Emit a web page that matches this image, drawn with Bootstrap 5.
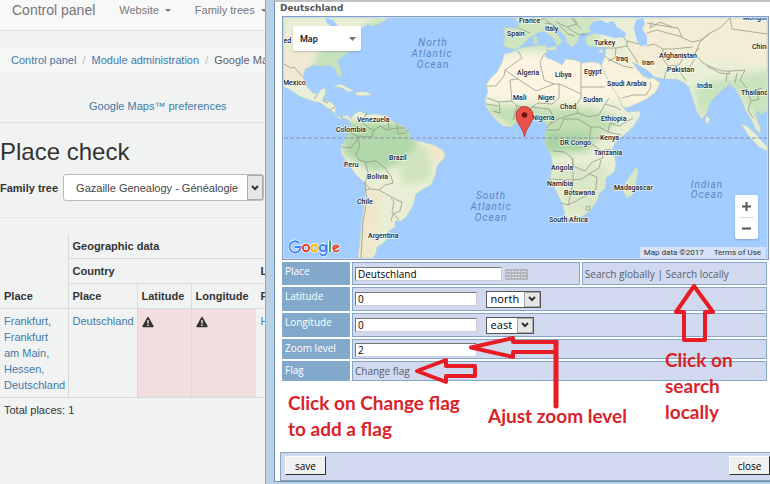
<!DOCTYPE html>
<html lang="en">
<head>
<meta charset="utf-8">
<meta name="viewport" content="width=device-width, initial-scale=1">
<title>Place check</title>
<link href="https://cdn.jsdelivr.net/npm/bootstrap@5.3.0/dist/css/bootstrap.min.css" rel="stylesheet">
<style>
body{font:11px/16px "Liberation Sans",Arial,sans-serif;color:#333;background:#f1f3f2}
a{color:#4379a8;text-decoration:none}
.admin{width:265px;flex:none;white-space:nowrap}
.topbar{height:31px;background:#f8f8f8;border-bottom:1px solid #dfe1e1;padding:0 0 10px 12px;--bs-navbar-padding-y:0;gap:24px}
.topbar a{color:#777}
.topbar .site-name{font-size:14px}
.topbar .dropdown-toggle::after{border-width:3px;border-bottom:0;margin-left:6px;vertical-align:2px}
.crumbs{background:#f5f6f6;padding:5px 0 5px 11px;margin:16px 0 0;height:26px;font-size:11px;flex-wrap:nowrap;--bs-breadcrumb-item-padding-x:6px;--bs-breadcrumb-divider-color:#bbb}
.crumbs li{flex:none}
.prefs{margin-top:25px;padding-left:89px;height:25px;border-bottom:1px solid #dcdede}
h1{font-size:24px;line-height:28px;margin:15px 0 8px;font-weight:400}
.tree-row{gap:5px;padding-bottom:16px;border-bottom:1px solid #e6e8e8;margin-bottom:16px}
.tree-pick{position:relative;flex:1;margin-right:1px}
.tree-pick select{appearance:none;width:100%;height:27px;border:1px solid #bbb;border-radius:3px;background:#fff;padding:0 12px;color:#444;font-size:11px}
.drop{position:absolute;right:1px;top:1px;bottom:1px;width:16px;background:#e7e7e7;border:1px solid #aaa;pointer-events:none;display:grid;place-items:center}
.places{width:300px;table-layout:fixed;border-collapse:collapse}
.places th,.places td{border:1px solid #d8dbdb;padding:4px;vertical-align:bottom;white-space:normal;line-height:16px}
.places td{vertical-align:top;height:89px}
.places tr>*:first-child.edge{border-left:0;border-top:0}
.places .top-cell{border-top:0}
.places .open{border-right-color:transparent}
.places .missing{background:#f2dede}
.popup{flex:1;min-width:0;background:#bad1e4;padding:0 0 2px 8px;border-left:1px solid #92a9ba}
.pane{height:100%;background:#fff;border:1px solid #6e93b0;border-top:2px solid #bfc3c7;border-right:0;padding:0 0 0 5px;font:10px/14px "Open Sans",Tahoma,sans-serif;color:#4b5566}
.pane h2{font:bold 9px/13px "DejaVu Sans",Verdana,sans-serif;margin:0 0 1px;color:#555}
.mapbox{margin:0 1px 0 2px;border:1px solid #7fa0c2;padding:1px;background:#d0d9ee;position:relative}
.mapbox>svg{display:block;width:100%;height:auto}
.map-type{position:absolute;left:10px;top:9px;width:68px;height:25px;background:#fff;border:0;border-radius:2px;padding:0 5px 0 7px;font:500 9px Roboto,sans-serif;color:#111;box-shadow:0 1px 2px #0003}
.map-zoom{position:absolute;right:10px;bottom:20px;width:23px;background:#fff;border-radius:2px;box-shadow:0 1px 2px #0003}
.map-zoom button{border:0;background:none;height:22px;padding:0;display:grid;place-items:center}
.map-zoom button+button{border-top:1px solid #ddd;margin:0 4px}
.map-legal{position:absolute;right:2px;bottom:1px;background:#d3e2f6;font:8px/11px Roboto,sans-serif;padding:0 5px 0 4px;gap:10px}
.map-legal a,.map-legal span{color:#333}
.coords{width:calc(100% - 1px);border-collapse:separate;border-spacing:2px}
.coords th{background:#82a9cb;color:#fff;font-weight:400;width:68px;vertical-align:top;padding:1px 2px;border:1px solid #82a9cb}
.coords td{background:#d0d9ee;border:1px solid #86a6c6;padding:0 2px;vertical-align:middle}
.coords tr{height:23px}
.coords tr.tall{height:24px}
.coords tr.short{height:20px}
.coords input{width:122px;height:14px;font-size:10px;line-height:12px;color:#000;border:1px solid #ccd;border-top-color:#777;border-left-color:#777;padding:0 2px;vertical-align:middle;background:#fff}
.coords input.wide{width:147px}
.coords select{appearance:none;height:17px;border:1px solid #555;padding:0 20px 0 4px;background:#fff;font-size:11px;line-height:14px;color:#000;display:block}
.coords a{color:#566073}
.pick{position:relative;display:inline-block;vertical-align:middle;margin-left:6px}
.foot{background:#d0d9ee;border:1px solid #8aa4bd;border-right:0;height:29px;padding:3px 0 0 4px;margin-top:auto}
.foot button{font-size:10px;line-height:12px;height:19px;width:41px;background:#f0f0f0;color:#000;border:1px solid #fff;border-right-color:#333;border-bottom-color:#333;padding:0}
.notes{position:absolute;left:0;top:0;width:770px;height:484px;pointer-events:none}
.lbl text{font:500 7px Roboto,sans-serif;fill:#222;stroke:#fff;stroke-width:1.6px;stroke-opacity:.7;paint-order:stroke}
.sea text{font:italic 10px Roboto,sans-serif;fill:#5b86c0;letter-spacing:1px}
.notes text{font:700 19px/26px Lato,Calibri,sans-serif;fill:#d8232a}
</style>
<script src="https://cdn.jsdelivr.net/npm/bootstrap@5.3.0/dist/js/bootstrap.bundle.min.js"></script>
</head>
<body>
<div class="d-flex vh-100 position-relative overflow-hidden">
<main class="admin overflow-hidden">
  <nav class="topbar navbar flex-nowrap justify-content-start">
    <a class="site-name" href="#">Control panel</a>
    <a class="dropdown-toggle" href="#">Website</a>
    <a class="dropdown-toggle" href="#">Family trees</a>
  </nav>
  <ol class="breadcrumb crumbs">
    <li class="breadcrumb-item"><a href="#">Control panel</a></li>
    <li class="breadcrumb-item"><a href="#">Module administration</a></li>
    <li class="breadcrumb-item active">Google Maps™</li>
  </ol>
  <div class="prefs"><a href="#">Google Maps™ preferences</a></div>
  <h1>Place check</h1>
  <div class="tree-row d-flex align-items-center">
    <label class="fw-bold" for="tree">Family tree</label>
    <div class="tree-pick"><select id="tree"><option>Gazaille Genealogy - Généalogie</option></select>
      <span class="drop"><svg width="8" height="6" fill="none" stroke="#333" stroke-width="2"><path d="M1 1l3 3 3-3"/></svg></span></div>
  </div>
  <table class="places">
    <colgroup><col style="width:68px"><col style="width:69px"><col style="width:54px"><col style="width:65px"><col></colgroup>
    <tr><th class="edge" rowspan="3">Place</th><th class="top-cell" colspan="4">Geographic data</th></tr>
    <tr><th class="open" colspan="3">Country</th><th>Locality</th></tr>
    <tr><th>Place</th><th>Latitude</th><th class="open">Longitude</th><th>Place</th></tr>
    <tr><td class="edge"><a href="#">Frankfurt, Frankfurt am Main, Hessen, Deutschland</a></td><td><a href="#">Deutschland</a></td>
      <td class="missing"><svg width="12" height="12" viewBox="0 0 12 12"><path d="M6 .8Q6.5.8 6.8 1.4L11.6 10Q11.9 11.1 11 11.2H1Q.1 11.1.4 10L5.2 1.4Q5.5.8 6 .8Z" fill="#333"/><path d="M6 4v3.5M6 8.6v1.4" stroke="#f2dede" stroke-width="1.5"/></svg></td>
      <td class="missing open"><svg width="12" height="12" viewBox="0 0 12 12"><path d="M6 .8Q6.5.8 6.8 1.4L11.6 10Q11.9 11.1 11 11.2H1Q.1 11.1.4 10L5.2 1.4Q5.5.8 6 .8Z" fill="#333"/><path d="M6 4v3.5M6 8.6v1.4" stroke="#f2dede" stroke-width="1.5"/></svg></td>
      <td><a href="#">Hessen</a></td></tr>
  </table>
  <div class="p-1">Total places: 1</div>
</main>

<section class="popup">
<div class="pane d-flex flex-column">
  <h2>Deutschland</h2>
  <div class="mapbox">
  <svg viewBox="285 18 483 240" role="img" aria-label="World map">
    <defs>
      <filter id="soft"><feGaussianBlur stdDeviation="3"/></filter>
      <clipPath id="land">
        <path id="am" d="M285 18H389L380 24 373 26 369 24 361 29 355 33 358 42 352 51 345 55 338 61 341 68 343 75 340 77 336 69 331 65 323 66 315 65 306 69 304 77 308 87 315 94 320 93 322 89 327 88 326 95 323 100 332 102 337 107 336 115 342 117 348 115 352 119 355 114 361 111 367 115 375 114 388 116 395 122 404 126 411 133 411 140 424 142 437 146 445 151 446 157 438 166 436 176 432 185 424 189 417 194 414 206 407 217 402 221 396 221 396 227 389 232 390 238 383 244 378 247 377 253 374 258H359L361 240 363 220 366 200 366 183 357 175 349 164 342 153 342 147 346 140 350 131 352 123 347 118 341 119 337 114 331 110 322 103 310 100 300 96 292 90 285 87Z"/>
        <path id="af" d="M505 54L513 52 522 48 535 46 546 45 548 49 546 57 556 61 563 65 567 59 575 60 584 63 592 62 600 63 604 68 608 77 613 88 620 97 623 106 628 112 641 111 641 116 634 127 625 135 617 142 613 149 616 158 617 165 615 172 607 178 606 188 600 194 599 199 592 210 584 216 570 219 566 215 563 203 557 191 551 179 554 165 551 153 546 143 546 133 549 128 545 121 536 119 530 122 520 121 512 127 504 126 496 119 490 112 486 104 487 97 489 91 487 85 491 79 498 72 503 63 505 55Z"/>
        <path id="eu" d="M515 18H768V110L762 115 758 109 757 116 761 126 762 134 757 130 752 119 747 111 742 99 737 90 731 84 724 89 719 94 711 102 708 112 703 119 698 112 693 96 690 87 684 82 677 79 665 79 656 77 648 70 638 64 633 62 638 69 644 76 651 79 654 78 661 83 657 92 646 100 628 108 624 107 620 98 612 85 607 76 602 67 606 56 607 47 598 47 590 46 586 40 589 36 596 33 591 31 587 34 583 32 580 37 577 44 572 47 568 42 566 36 559 29 554 26 555 31 560 36 563 42 558 46 555 39 549 34 544 31 538 33 531 37 525 43 518 49 510 48 505 46 506 36 505 28 519 28 520 23Z"/>
        <path id="isle" d="M637 167L639 171 637 181 633 195 628 198 625 192 627 182 631 177ZM334 86L342 84 351 89 355 91 350 92 343 88ZM357 92L368 92 373 95 363 96 357 95ZM742 124L748 126 757 134 768 147V151L760 147 749 135ZM707 115L711 119 709 124 706 121ZM535 37L538 36 538 44 535 43ZM548 48L557 46 556 50 549 50ZM599 51L605 49 602 53Z"/>
      </clipPath>
    </defs>
    <rect x="285" y="18" width="483" height="240" fill="#a3ccff"/>
    <g clip-path="url(#land)">
      <rect x="285" y="18" width="483" height="240" fill="#e9efd6"/>
      <g filter="url(#soft)">
        <path d="M280 30H330L315 70 285 90Z" fill="#f0ead4"/>
        <path d="M320 50L385 15V40L345 80 310 72Z" fill="#c5e2bd"/>
        <path d="M480 60L600 50 625 98 590 101 480 98Z" fill="#fdf4e2"/>
        <path d="M600 55L665 80 640 108 615 100Z" fill="#fbf2da"/>
        <path d="M480 106L590 108 622 118 605 135 590 152 545 156 525 135Z" fill="#c2dfb3"/>
        <path d="M545 132H588V150H545Z" fill="#a9d3a2"/>
        <path d="M550 165H612L600 215H570Z" fill="#dbe8c8"/>
        <path d="M650 15H770V65L700 60 640 75 625 55Z" fill="#f4edd6"/>
        <path d="M500 15H600V50H500Z" fill="#cfe5c0"/>
        <path d="M342 122L412 122 418 145 398 165 375 172 345 155Z" fill="#b0d8a8"/>
        <path d="M418 144L432 150 432 180 405 185 400 165Z" fill="#cfe4bd"/>
        <path d="M430 144L450 150 440 165 428 158Z" fill="#f2e6cc"/>
        <path d="M360 185L385 190 375 260H355Z" fill="#efe8cc"/>
        <path d="M695 85L770 70V140L740 95 700 118Z" fill="#c9e3bd"/>
      </g>
    </g>
    <path d="M593 33L590 28 594 22 602 20 608 23 614 21 618 27 627 33 626 37 615 38 605 35ZM637 20L644 18 646 24 643 29 648 36 648 45 641 46 637 38 635 28ZM326 18L334 20 339 26 333 27 328 23Z" fill="#a3ccff"/>
    <g fill="none" stroke="#c0d3b8" stroke-width=".6"><use href="#am"/><use href="#af"/><use href="#eu"/><use href="#isle"/></g>
    <path d="M637 167L639 171 637 181 633 195 628 198 625 192 627 182 631 177Z" fill="#d7e8c5"/>
    <g fill="none" stroke="#8b8f80" stroke-width=".7" stroke-linejoin="round">
      <path d="M285 64L292 68 295 67 304 77M315 99L319 94M324 101L329 103M331 110L336 107M344 119L342 116M368 113L363 122 370 128 375 130 373 137 358 136 361 146 357 154 360 160 367 162 377 161 386 168 392 176 394 183 386 185 380 190 371 189 368 185 366 183M375 130L381 126 388 130 398 128 406 128M388 118L390 129M398 124L399 134 406 133 410 129M350 132L358 136M343 147L352 148 358 140M366 162L369 172 366 184 368 200 364 222 362 258M380 190L398 200 403 202 401 211 394 214 392 221M392 198L395 202 393 212 400 220M371 189L366 190"/>
      <path d="M519 51L523 58 506 70 505 76 497 86H487M506 70L519 79 537 91 555 84 561 84 582 94M546 53L541 62 545 80 555 84M582 62V87H606M560 84V98L553 104 539 103 533 107M519 79L511 80 513 101 500 102 488 98M582 87V98L577 105 579 113 568 116 557 120 552 124M610 98L606 104 600 115 590 117 579 113M533 107L528 114 530 122M533 107L550 109 555 118 548 128M500 102L501 113 494 111M513 101L518 106 514 120M528 107L518 106M547 130L560 130 565 119 579 119 592 127 590 142 602 151 612 149M592 127L600 127 609 132 622 135M609 132L611 123 620 126 634 118M606 104L616 107 622 110M554 151L565 152 573 158 574 166 586 171 593 162 604 158 602 150M574 158L574 180 551 179M574 180L583 179 590 174 598 177 597 188M574 181L572 193 569 205 577 201 590 194 598 188M562 203L569 205M587 207L591 206 591 210 587 210ZM590 174L600 168 602 160M487 104L499 106"/>
      <path d="M519 28L531 33M531 18L539 22 545 18 552 24M557 22L568 27 578 24 575 18M560 25L569 34 576 36M569 28L580 35 589 34M607 48L617 48 628 46 628 41 624 37M606 56L611 60 624 66 634 68M617 48L616 58 609 61M628 46L634 55 639 63M628 41L640 44M648 46L655 44 664 49 664 59 669 66 665 79M664 49L675 49 683 48 694 47M669 66L680 65 685 56 694 55 700 48M623 98L634 95 647 95 652 87 651 82M648 33L658 30 668 33 680 36 693 42 702 40 711 33 721 28 731 18M648 23L665 26 679 28 683 37M653 22L651 28 661 22 673 27M731 18L733 29 768 34M711 33L701 42 696 54 704 63 712 67 723 71 732 71 746 70M687 81L681 72 690 68 697 57M708 66L721 73 731 74 729 71M728 73L727 82M738 73L736 83M746 70L741 80 747 87 752 101 760 99 756 90 763 88M752 101L749 110 754 118M557 25L546 23M572 18L582 29"/>
    </g>
    <path d="M285 138H768" stroke="#8d91b8" stroke-width="1" stroke-dasharray="4 2"/>
    <g class="lbl">
      <text x="272" y="43">United</text><text x="284" y="85">Mexico</text><text x="358" y="122">Venezuela</text><text x="337" y="132">Colombia</text><text x="390" y="160">Brazil</text><text x="345" y="167">Peru</text><text x="368" y="179">Bolivia</text><text x="358" y="204">Chile</text><text x="369" y="238">Argentina</text>
      <text x="520" y="23">France</text><text x="508" y="36">Spain</text><text x="546" y="31">Italy</text><text x="595" y="45">Turkey</text><text x="518" y="75">Algeria</text><text x="556" y="77">Libya</text><text x="585" y="74">Egypt</text><text x="617" y="61">Iraq</text><text x="643" y="65">Iran</text><text x="660" y="58">Afghanistan</text><text x="668" y="72">Pakistan</text><text x="608" y="86">Saudi Arabia</text><text x="698" y="88">India</text><text x="753" y="49">China</text><text x="742" y="95">Thailand</text><text x="744" y="20">Mongolia</text><text x="514" y="100">Mali</text><text x="539" y="100">Niger</text><text x="561" y="109">Chad</text><text x="584" y="102">Sudan</text><text x="533" y="120">Nigeria</text><text x="602" y="121">Ethiopia</text><text x="561" y="145">DR Congo</text><text x="601" y="140">Kenya</text><text x="595" y="155">Tanzania</text><text x="552" y="170">Angola</text><text x="548" y="186">Namibia</text><text x="565" y="195">Botswana</text><text x="615" y="190">Madagascar</text><text x="550" y="222">South Africa</text>
    </g>
    <g class="sea" text-anchor="middle"><text x="434" y="46">North</text><text x="433" y="57">Atlantic</text><text x="434" y="68">Ocean</text><text x="492" y="199">South</text><text x="492" y="210">Atlantic</text><text x="492" y="221">Ocean</text><text x="708" y="188">Indian</text><text x="708" y="198">Ocean</text></g>
    <path d="M525.500 137C524 127 517 124 517 115A8.500 8.500 0 0 1 534 115C534 124 527 127 525.500 137Z" fill="#ea5148" stroke="#b5312a" stroke-width=".8"/><circle cx="525.500" cy="115" r="2.800" fill="#6f1310"/>
    <g fill="none" stroke="#fff" stroke-width="3.500" stroke-opacity=".8"><path d="M300 243A5.600 5.600 0 1 0 301.600 247H296"/><circle cx="307" cy="248" r="3.200"/><circle cx="315.500" cy="248" r="3.200"/><circle cx="324" cy="248" r="3.200"/><path d="M331 240V252M327.700 244.500V252Q327 256 323.500 255.300L321 253.700M334.500 249.200L339.500 246.500A3 3 0 1 0 339.700 250"/></g>
    <g fill="none" stroke-width="1.900"><path d="M300 243A5.600 5.600 0 1 0 301.600 247H296" stroke="#4285f4"/><circle cx="307" cy="248" r="3.200" stroke="#ea4335"/><circle cx="315.500" cy="248" r="3.200" stroke="#fbbc05"/><circle cx="324" cy="248" r="3.100" stroke="#4285f4"/><path d="M327.700 244.500V252Q327 256 323.500 255.300L321 253.700" stroke="#4285f4"/><path d="M331 240.500V252" stroke="#34a853"/><path d="M334.500 249.200L339.500 246.500A3 3 0 1 0 339.700 250" stroke="#ea4335"/></g>
  </svg>
  <button class="map-type d-flex align-items-center justify-content-between" type="button">Map<svg width="7" height="4"><path d="M0 0h7L3.500 4z" fill="#777"/></svg></button>
  <div class="map-zoom d-grid"><button type="button" aria-label="Zoom in"><svg width="9" height="9" stroke="#555" stroke-width="2"><path d="M0 4.500h9M4.500 0v9"/></svg></button><button type="button" aria-label="Zoom out"><svg width="9" height="9" stroke="#555" stroke-width="2"><path d="M0 4.500h9"/></svg></button></div>
  <div class="map-legal d-flex"><span>Map data ©2017</span><a href="#">Terms of Use</a></div>
  </div>

  <table class="coords">
    <tr><th><label for="pl">Place</label></th><td><input class="wide" id="pl" value="Deutschland">
      <svg class="align-middle" width="23" height="11"><rect width="23" height="11" rx="1" fill="#b3b7bd"/><path d="M1 2.500h21M1 5.500h21M1 8.500h21" stroke="#e3e5e8" stroke-dasharray="2 1"/></svg></td>
      <td style="width:38.500%"><a href="#">Search globally</a> | <a href="#">Search locally</a></td></tr>
    <tr class="tall"><th><label for="la">Latitude</label></th><td colspan="2"><input id="la" value="0">
      <span class="pick"><select aria-label="Latitude direction"><option>north</option></select><span class="drop"><svg width="8" height="6" fill="none" stroke="#333" stroke-width="2"><path d="M1 1l3 3 3-3"/></svg></span></span></td></tr>
    <tr class="tall"><th><label for="lo">Longitude</label></th><td colspan="2"><input id="lo" value="0">
      <span class="pick"><select aria-label="Longitude direction"><option>east</option></select><span class="drop"><svg width="8" height="6" fill="none" stroke="#333" stroke-width="2"><path d="M1 1l3 3 3-3"/></svg></span></span></td></tr>
    <tr class="short"><th><label for="zo">Zoom level</label></th><td colspan="2"><input id="zo" value="2"></td></tr>
    <tr class="short"><th>Flag</th><td colspan="2"><a href="#">Change flag</a></td></tr>
  </table>
  <div class="foot d-flex justify-content-between align-items-start"><button type="button">save</button><button type="button">close</button></div>
</div>
</section>

<svg class="notes" viewBox="0 0 770 484">
  <g fill="none" stroke="#e81c24" stroke-width="4" stroke-linejoin="round" stroke-linecap="round">
    <path d="M417 371L446 360V366H475V376H446V382ZM556 406V342H513V338L471 347.500 513 357V352H556M694 286L713 312H705V340H684V312H676Z"/>
    <path d="M556 406V342" stroke-width="5"/>
  </g>
  <text x="288" y="410">Click on Change flag</text><text x="288" y="436">to add a flag</text>
  <text x="488" y="423">Ajust zoom level</text>
  <text x="665" y="367">Click on</text><text x="665" y="393">search</text><text x="665" y="419">locally</text>
</svg>
</div>
</body>
</html>
